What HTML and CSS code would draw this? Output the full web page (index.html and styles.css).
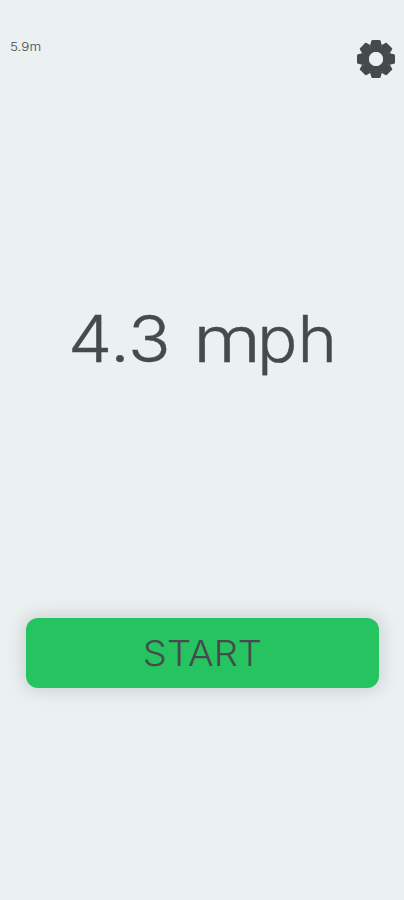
FILE: index.html
```html
<!DOCTYPE html>
<html lang="en">
<head>
<meta charset="utf-8">
<meta name="viewport" content="width=device-width, initial-scale=1">
<title>Speed</title>
<link rel="stylesheet" href="styles.css">
</head>
<body>
<main class="screen">
  <header class="top">
    <span class="accuracy">5.9m</span>
    <button class="settings" aria-label="Settings">
      <svg viewBox="-20 -20 40 40" width="40" height="40">
        <defs><path id="tooth" d="M-6-13L-4.7-18Q-4.4-19-3.4-19H3.4Q4.4-19 4.7-18L6-13Z"/></defs>
        <g fill="#474a4b">
          <use href="#tooth"/>
          <use href="#tooth" transform="rotate(45)"/>
          <use href="#tooth" transform="rotate(90)"/>
          <use href="#tooth" transform="rotate(135)"/>
          <use href="#tooth" transform="rotate(180)"/>
          <use href="#tooth" transform="rotate(225)"/>
          <use href="#tooth" transform="rotate(270)"/>
          <use href="#tooth" transform="rotate(315)"/>
        </g>
        <circle r="10.5" fill="none" stroke="#474a4b" stroke-width="7"/>
        <circle r="7" fill="#ebf0f1"/>
      </svg>
    </button>
  </header>
  <section class="speed"><span class="value">4.3</span><span class="unit"><span class="wide">m</span><span class="rest">ph</span></span></section>
  <button class="start"><span class="label">START</span></button>
</main>
</body>
</html>
```

FILE: styles.css
```css
* { box-sizing: border-box; }
body {
  margin: 0;
  background: #ebf0f1;
  color: #474a4b;
  font-family: Inter, Roboto, sans-serif;
}
button { border: 0; padding: 0; font: inherit; color: inherit; }
.screen { display: flex; flex-direction: column; height: 900px; }
.top {
  display: flex;
  justify-content: space-between;
  align-items: flex-start;
  height: 299px;
  padding: 39px 8px 0 10px;
}
.accuracy { font-size: 12px; font-weight: 300; line-height: 16px; transform: scaleX(1.12); transform-origin: left; }
.settings { background: none; width: 40px; height: 40px; }
.settings svg { display: block; }
.speed {
  display: flex;
  height: 319px;
  padding-left: 70px;
  font-size: 64px;
  font-weight: 300;
  line-height: 80px;
  -webkit-text-stroke: 0.4px #474a4b;
}
.value { width: 126px; }
.value { transform: translateX(-2px) scaleX(1.1); transform-origin: left; }
.unit { display: flex; }
.wide { transform: translateX(-3px) scaleX(1.22); transform-origin: left; }
.rest { transform: translateX(5px) scaleX(1.05); transform-origin: left; }
.start {
  width: 353px;
  height: 70px;
  margin-left: 26px;
  border-radius: 12px;
  background: #25c460;
  box-shadow: 0 0 16px 3px rgba(70, 80, 85, .18);
  font-size: 36px;
  font-weight: 300;
  line-height: 70px;
}
.label { display: block; transform: scaleX(1.06); }
```
